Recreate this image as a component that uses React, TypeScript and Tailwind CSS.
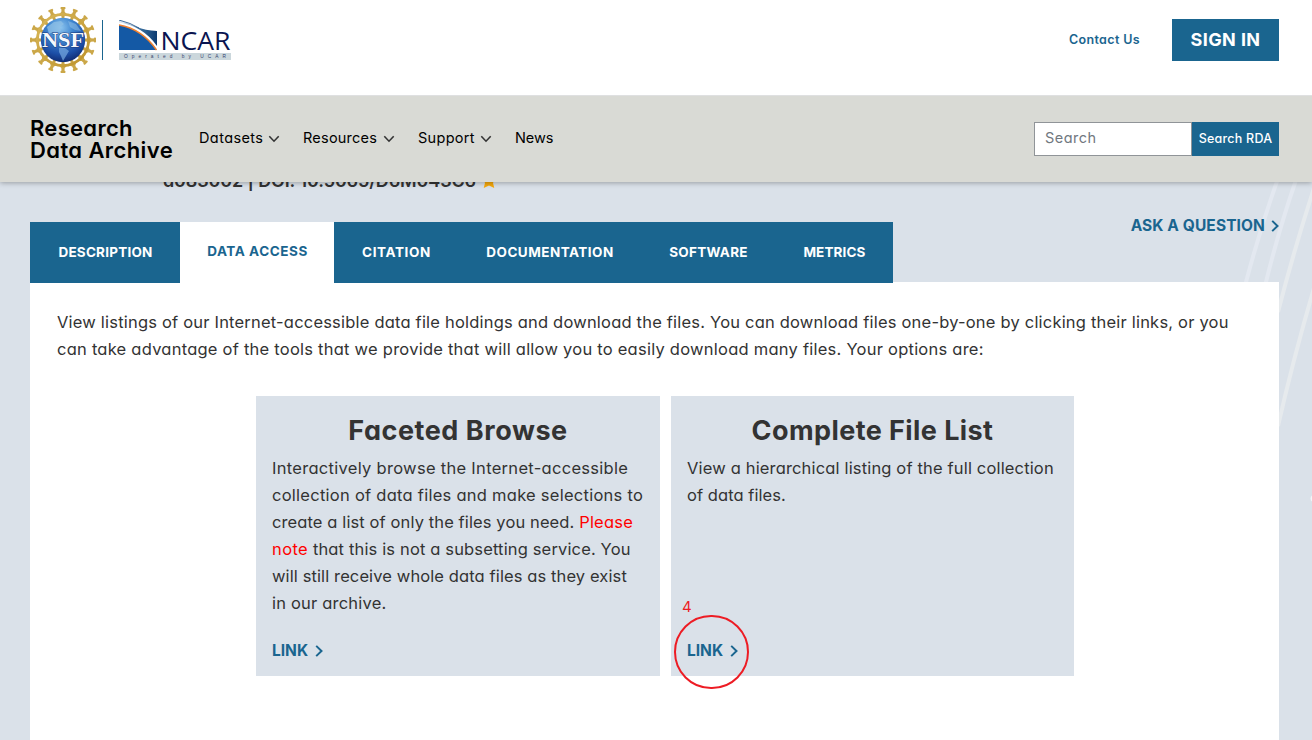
import type { ReactNode } from "react";

const cogAngles = Array.from({ length: 16 }, (_, i) => i * 22.5);

function NsfLogo() {
  return (
    <svg className="h-[68px] w-[68px]" viewBox="-34 -34 68 68" aria-label="NSF">
      <defs>
        <radialGradient id="globe" cx="0.45" cy="0.22" r="0.8">
          <stop offset="0" stopColor="#8cc4ee" />
          <stop offset="0.35" stopColor="#3f86d0" />
          <stop offset="0.75" stopColor="#1c4ea6" />
          <stop offset="1" stopColor="#10296e" />
        </radialGradient>
        <linearGradient id="gold" x1="0" y1="0" x2="1" y2="1">
          <stop offset="0" stopColor="#d9b85a" />
          <stop offset="1" stopColor="#bd922c" />
        </linearGradient>
      </defs>
      {cogAngles.map((a) => (
        <g key={a} transform={`rotate(${a})`} fill="#cba748">
          <path d="M-5.400 -24.500 L-1.700 -28 L-1.500 -30.500 L-2.600 -31.500 L-2.200 -33 L2.200 -33 L2.600 -31.500 L1.500 -30.500 L1.700 -28 L5.400 -24.500 L1.700 -24.500 L1.200 -21 L-1.200 -21 L-1.700 -24.500 Z" />
        </g>
      ))}
      <circle r="25.600" fill="none" stroke="url(#gold)" strokeWidth="2.800" />
      <circle r="22.200" fill="url(#globe)" />
      <path d="M-16 -13 L-9 -18 L-2 -19 L1 -16 L-3 -13 L-2 -9 L-7 -6 L-10 -8 L-14 -6 Z" fill="#8fc0e6" opacity="0.75" />
      <path d="M5 -19 L13 -16 L18 -9 L12 -10 L7 -13 Z" fill="#8fc0e6" opacity="0.55" />
      <path d="M-4 8 L2 8 L6 11 L3 16 L0 21 L-2 16 L-4 12 Z" fill="#78a9e0" opacity="0.7" />
      <text x="0" y="7.400" textAnchor="middle" fontFamily="Liberation Serif, serif" fontWeight="700" fontSize="22" fill="#f4f8fc" stroke="#1c3a7c" strokeWidth="0.900" paintOrder="stroke" textLength="42" lengthAdjust="spacingAndGlyphs">NSF</text>
    </svg>
  );
}

function NcarLogo() {
  return (
    <svg className="h-[40px] w-[112px]" viewBox="0 0 112 40" aria-label="NCAR">
      <defs>
        <linearGradient id="sky" x1="0" y1="0" x2="1" y2="0">
          <stop offset="0.1" stopColor="#dce8f2" />
          <stop offset="0.55" stopColor="#3a6f9f" />
          <stop offset="1" stopColor="#0b3a70" />
        </linearGradient>
      </defs>
      <path d="M0 0 L18 7 Q26 10.500 38 11 V30 Q26 10 0 3 Z" fill="url(#sky)" />
      <path d="M0 0 Q12 3 20 8" fill="none" stroke="#174a80" strokeWidth="0.800" />
      <path d="M0 2.500 Q24 6 38 26 V30 Q24 9 0 5 Z" fill="#fff" />
      <path d="M0 5 Q23 9 37.500 30 H0 Z" fill="#1459a5" />
      <path d="M0 5 Q23 9 37.500 30" fill="none" stroke="#f0802e" strokeWidth="1.500" />
      <text x="41.500" y="30" fontFamily="Open Sans, sans-serif" fontWeight="500" fontSize="25" fill="#0a1450" textLength="70" lengthAdjust="spacingAndGlyphs">NCAR</text>
      <rect x="0" y="33" width="112" height="7" fill="#cbd7dc" />
      <text x="5" y="38.300" fontFamily="Liberation Sans, sans-serif" fontWeight="400" fontSize="4.800" fill="#34436c" textLength="102">Operated by UCAR</text>
    </svg>
  );
}

function Chevron({ className, down = false }: { className: string; down?: boolean }) {
  return (
    <svg className={className} viewBox={down ? "0 0 12 8" : "0 0 8 12"} fill="none" stroke="currentColor">
      <path d={down ? "M1.300 1.300 L6 6.200 L10.700 1.300" : "M1.200 0.900 L6.500 6 L1.200 11.100"} strokeWidth={down ? 1.6 : 2} />
    </svg>
  );
}

function NavItem({ label, className, menu = false }: { label: string; className: string; menu?: boolean }) {
  return (
    <a className={`flex items-center whitespace-nowrap text-[14.5px] leading-5 text-black ${className}`}>
      <span className="flex-1">{label}</span>
      {menu && <Chevron down className="mt-[3px] h-2 w-3 text-[#333]" />}
    </a>
  );
}

const tabs = [
  { label: "DESCRIPTION", className: "w-[150px] tracking-[0.22px]" },
  { label: "DATA ACCESS", className: "w-[154px] tracking-[0.56px]", active: true },
  { label: "CITATION", className: "w-[124px] tracking-[0.6px]" },
  { label: "DOCUMENTATION", className: "w-[183px] tracking-[0.47px]" },
  { label: "SOFTWARE", className: "w-[134px] tracking-[0.27px]" },
  { label: "METRICS", className: "w-[118px] tracking-[0.13px]" },
];

function Card({ title, className, titleClass, children }: { title: string; className: string; titleClass: string; children: ReactNode }) {
  return (
    <article className={`flex h-[280px] shrink-0 flex-col bg-[#dae1e9] pl-4 pr-4 pt-[14px] ${className}`}>
      <h2 className={`text-center text-[27px] font-bold leading-[42px] ${titleClass}`}>{title}</h2>
      <div className="mt-[3px] h-[162px] whitespace-nowrap">{children}</div>
      <a className="mt-[20px] flex items-center gap-[7px] text-[15.5px] font-bold leading-[27px] text-[#1a658f]">
        LINK
        <Chevron className="h-3 w-2" />
      </a>
    </article>
  );
}

export default function App() {
  return (
    <div className="flex h-[740px] w-[1312px] flex-col overflow-hidden bg-white font-['Inter',sans-serif] text-[#333] [font-feature-settings:'cv11']">
      <header className="relative z-20 flex h-[95px] shrink-0 items-start bg-white pl-[29px] pr-[33px]">
        <div className="mt-[6px]"><NsfLogo /></div>
        <div className="ml-[5px] mt-5 h-10 w-px bg-[#1a658f]" />
        <div className="ml-4 mt-5"><NcarLogo /></div>
        <a className="ml-auto mt-[30px] text-[12.5px] font-semibold leading-5 tracking-[0.36px] text-[#1a658f]">Contact Us</a>
        <button className="ml-[32px] mt-[19px] h-[42px] w-[107px] bg-[#1a658f] pb-[2px] text-[18px] font-bold tracking-[0.4px] text-white">SIGN IN</button>
      </header>

      <nav className="relative z-10 flex h-[87px] shrink-0 items-center border-t border-[#dfe0e1] bg-[#d9dad5] pl-[30px] pr-[33px] shadow-[0_1px_5px_rgba(0,0,0,0.3)]">
        <div className="w-[169px] whitespace-nowrap text-[22px] font-semibold leading-[22px] text-black">
          <div className="tracking-[0.3px]">Research</div>
          <div className="tracking-[0.4px]">Data Archive</div>
        </div>
        <div className="-mt-[3px] flex">
          <NavItem label="Datasets" menu className="w-[81px] tracking-[0.4px]" />
          <NavItem label="Resources" menu className="ml-[23px] w-[92px] tracking-[0.22px]" />
          <NavItem label="Support" menu className="ml-[23px] w-[74px] tracking-[0.3px]" />
          <NavItem label="News" className="ml-[23px] tracking-[-0.1px]" />
        </div>
        <form className="ml-auto flex h-[34px]">
          <input placeholder="Search" className="w-[158px] border border-[#909498] bg-white px-[10px] pb-[3px] text-[14.5px] tracking-[0.45px] placeholder:text-[#717880]" />
          <button type="button" className="w-[87px] bg-[#1a658f] text-[12.5px] font-medium tracking-[0.22px] text-white">Search RDA</button>
        </form>
      </nav>

      <main className="relative flex-1 overflow-hidden bg-[#dae1e9] pl-[30px] pr-[33px]">
        <svg className="absolute left-0 top-0 h-[558px] w-[1312px]" viewBox="0 182 1312 558" fill="none" strokeWidth="4">
          <path d="M1277.500 180 Q1260 229 1245.500 284" stroke="#e3e8f0" />
          <path d="M1296 180 Q1279 229 1265.500 284" stroke="#e3e8f0" />
          <path d="M1314 188 Q1294 250 1278 312" stroke="#e6eaed" />
          <path d="M1314 288 Q1294 356 1278 426" stroke="#e6eaed" />
          <circle cx="1314" cy="498.500" r="3.500" fill="#f2f5f8" />
        </svg>

        <div className="relative -mt-[14px] ml-[133px] flex h-[26px] items-center gap-[6px]">
          <span className="whitespace-nowrap text-[18px] font-semibold leading-[26px] tracking-[-0.14px]">d083002 | DOI: 10.5065/D6M043C6</span>
          <svg className="h-[14px] w-[14px]" viewBox="0 0 24 24" fill="#f5a80c">
            <path d="M12 0l3.700 8 8.300 1-5.200 6L21 24l-9-4.500L3 24l2.200-9L0 9l8.300-1z" />
          </svg>
        </div>

        <div className="relative z-[1] mt-[28px] flex h-[60px] items-start">
          <ul className="flex h-[61px]">
            {tabs.map((t) => (
              <li
                key={t.label}
                className={`flex items-center justify-center whitespace-nowrap pl-px text-[13.5px] font-bold ${t.className} ${t.active ? "bg-white pb-[2px] text-[#1a658f]" : "bg-[#1a658f] text-white"}`}
              >
                {t.label}
              </li>
            ))}
          </ul>
          <a className="-mt-[6px] ml-auto flex items-center gap-[6px] text-[15.5px] font-bold leading-5 tracking-[0.1px] text-[#1a658f]">
            ASK A QUESTION
            <Chevron className="h-3 w-2" />
          </a>
        </div>

        <section className="relative h-[458px] bg-white px-[27px] pt-[27px]">
          <p className="whitespace-nowrap text-[16.5px] leading-[27px]">
            <span className="block tracking-[0.2px]">View listings of our Internet-accessible data file holdings and download the files. You can download files one-by-one by clicking their links, or you</span>
            <span className="block tracking-[0.24px]">can take advantage of the tools that we provide that will allow you to easily download many files. Your options are:</span>
          </p>

          <div className="relative ml-[199px] mt-[33px] flex w-[818px] gap-[11px] text-[16.5px] leading-[27px]">
            <Card title="Faceted Browse" className="w-[404px]" titleClass="tracking-[0.55px]">
              <span className="block tracking-[0.295px]">Interactively browse the Internet-accessible</span>
              <span className="block tracking-[0.26px]">collection of data files and make selections to</span>
              <span className="block tracking-[0.11px]">create a list of only the files you need. <span className="tracking-[0.2px] text-[#f00]">Please</span></span>
              <span className="block tracking-[0.15px]"><span className="tracking-[0.4px] text-[#f00]">note</span> that this is not a subsetting service. You</span>
              <span className="block tracking-[0.11px]">will still receive whole data files as they exist</span>
              <span className="block tracking-[0.2px]">in our archive.</span>
            </Card>
            <Card title="Complete File List" className="w-[403px]" titleClass="tracking-[0.42px]">
              <span className="block tracking-[0.16px]">View a hierarchical listing of the full collection</span>
              <span className="block tracking-[0.06px]">of data files.</span>
            </Card>
            <span className="absolute left-[426px] top-[201px] text-[15px] leading-5 text-[#ed1c24]">4</span>
            <span className="absolute left-[418px] top-[219px] h-[74px] w-[75px] rounded-full border-2 border-[#ed1c24]" />
          </div>
        </section>
      </main>
    </div>
  );
}
